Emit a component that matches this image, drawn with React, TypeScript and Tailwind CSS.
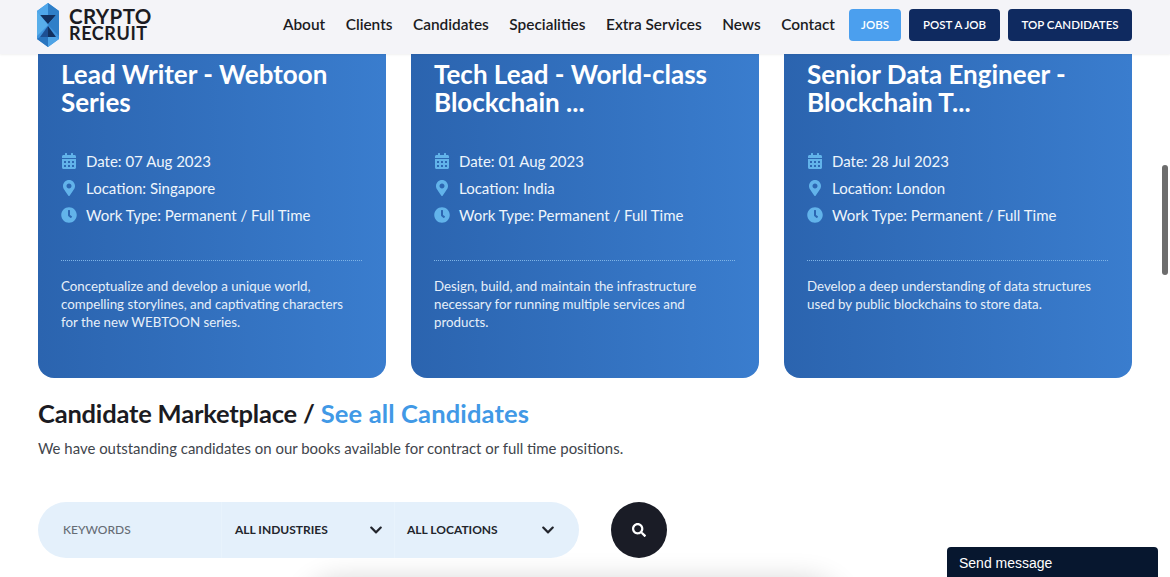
import { FaCalendarAlt, FaChevronDown, FaClock, FaMapMarkerAlt, FaSearch } from "react-icons/fa";

const navLinks = ["About", "Clients", "Candidates", "Specialities", "Extra Services", "News", "Contact"];

const jobs = [
  {
    title: "Lead Writer - Webtoon Series",
    date: "07 Aug 2023",
    location: "Singapore",
    text: "Conceptualize and develop a unique world, compelling storylines, and captivating characters for the new WEBTOON series.",
  },
  {
    title: "Tech Lead - World-class Blockchain ...",
    date: "01 Aug 2023",
    location: "India",
    text: "Design, build, and maintain the infrastructure necessary for running multiple services and products.",
  },
  {
    title: "Senior Data Engineer - Blockchain T...",
    date: "28 Jul 2023",
    location: "London",
    text: "Develop a deep understanding of data structures used by public blockchains to store data.",
  },
];

function Logo() {
  return (
    <div className="flex items-center gap-[10px]">
      <svg width="22" height="44" viewBox="0 0 22 44" aria-hidden="true">
        <polygon points="11,0 22,8 22,36 11,44 0,36 0,8" fill="#3f94de" />
        <polygon points="0,8 11,0 11,12 3,12" fill="#4fa6ea" />
        <polygon points="11,0 22,8 19,12 11,12" fill="#2f7fc8" />
        <polygon points="3,12 19,12 11,21" fill="#12305f" />
        <polygon points="0,8 3,12 11,22 0,33" fill="#58aeea" />
        <polygon points="22,8 19,12 11,22 22,33" fill="#2f7fc8" />
        <polygon points="3,34 11,23 11,34" fill="#1d4f93" />
        <polygon points="19,34 11,23 11,34" fill="#12305f" />
        <polygon points="0,36 3,34 11,34 11,44" fill="#2a75bf" />
        <polygon points="22,36 19,34 11,34 11,44" fill="#4ea3e6" />
      </svg>
      <div className="flex flex-col text-[#1b1b22]">
        <span className="text-[20.5px] leading-[17px] font-bold tracking-[0.4px]">CRYPTO</span>
        <span className="text-[18px] leading-[17px] font-bold tracking-[0.6px]">RECRUIT</span>
      </div>
    </div>
  );
}

function Header() {
  return (
    <header className="absolute inset-x-0 top-0 z-10 flex h-[54px] items-center justify-between bg-[#f4f4f8] pr-[38px] pb-1 pl-[37px] shadow-[0_1px_2px_rgba(0,0,0,0.06)]">
      <Logo />
      <nav className="flex items-center">
        <ul className="mr-[14px] flex gap-[20.5px] text-[15.4px] font-semibold text-[#1b1b22]">
          {navLinks.map((link) => (
            <li key={link}>{link}</li>
          ))}
        </ul>
        <div className="flex h-8 gap-2 text-[11.5px] font-semibold text-white">
          <span className="flex w-[52px] items-center justify-center rounded bg-[#4b9fee]">JOBS</span>
          <span className="flex w-[91px] items-center justify-center rounded bg-[#0f2a60]">POST A JOB</span>
          <span className="flex w-[124px] items-center justify-center rounded bg-[#0f2a60]">TOP CANDIDATES</span>
        </div>
      </nav>
    </header>
  );
}

function JobCard({ job }: { job: (typeof jobs)[number] }) {
  return (
    <article className="h-[324px] rounded-b-[16px] bg-gradient-to-r from-[#2b64af] to-[#3a7dce] pt-[6px] pr-[24px] pl-[23px] text-white">
      <h3 className="text-[26px] leading-[28px] font-bold">{job.title}</h3>
      <ul className="mt-[35px] flex flex-col gap-[7px] text-[15px] leading-[20px] text-[#eef5fc]">
        <li className="flex items-center gap-[9px]">
          <FaCalendarAlt className="h-4 w-4 text-[#62b3ea]" />
          Date: {job.date}
        </li>
        <li className="flex items-center gap-[9px]">
          <FaMapMarkerAlt className="h-4 w-4 text-[#62b3ea]" />
          Location: {job.location}
        </li>
        <li className="flex items-center gap-[9px]">
          <FaClock className="h-4 w-4 text-[#62b3ea]" />
          Work Type: Permanent / Full Time
        </li>
      </ul>
      <div className="mt-[35px] border-t border-dotted border-[#7fb4e6]" />
      <p className="mt-[16px] max-w-[296px] text-[13.3px] leading-[18px] text-[#e6eff9]">{job.text}</p>
    </article>
  );
}

function SearchBar() {
  return (
    <div className="mt-[44px] flex items-center gap-[32px]">
      <div className="flex h-14 w-[541px] items-center rounded-full bg-[#e4f0fb] text-[12px]">
        <span className="w-[183px] pl-[25px] font-medium text-[#666c74]">KEYWORDS</span>
        <div className="flex h-full w-[173px] items-center justify-between border-l border-[#e8f3fc] pr-[11px] pl-[13px] font-bold text-[#22252c]">
          ALL INDUSTRIES
          <FaChevronDown className="h-[14px] w-[14px]" />
        </div>
        <div className="flex h-full w-[171px] items-center justify-between border-l border-[#e8f3fc] pr-[10px] pl-[12px] font-bold text-[#22252c]">
          ALL LOCATIONS
          <FaChevronDown className="h-[14px] w-[14px]" />
        </div>
      </div>
      <button className="flex h-14 w-14 items-center justify-center rounded-full bg-[#1a1c26] text-white">
        <FaSearch className="h-[14px] w-[14px]" />
      </button>
    </div>
  );
}

export default function App() {
  return (
    <div className="relative h-[577px] overflow-hidden bg-white font-['Lato',sans-serif] text-[#1b1b22]">
      <Header />
      <main className="px-[38px] pt-[54px]">
        <section className="grid w-[1094px] grid-cols-3 gap-[25px]">
          {jobs.map((job) => (
            <JobCard key={job.title} job={job} />
          ))}
        </section>
        <section className="mt-[19px]">
          <h2 className="text-[25.5px] leading-[32px] font-bold tracking-[-0.2px]">
            Candidate Marketplace / <span className="tracking-[0.15px] text-[#4199e6]">See all Candidates</span>
          </h2>
          <p className="mt-[9px] text-[14.95px] leading-[20px] text-[#41454c]">
            We have outstanding candidates on our books available for contract or full time positions.
          </p>
          <SearchBar />
        </section>
        <div className="mt-[24px] ml-[270px] h-[60px] w-[530px] rounded-[40px] bg-white shadow-[0_0_30px_rgba(0,0,0,0.2)]" />
      </main>
      <div className="absolute top-[165px] right-[2px] h-[110px] w-[6px] rounded-full bg-[#6d6d6d]" />
      <div className="absolute right-[12px] bottom-0 flex h-[30px] w-[211px] items-center rounded-t bg-[#07172f] px-3 pt-[2px] font-['Liberation_Sans',sans-serif] text-[14px] text-white">
        Send message
      </div>
    </div>
  );
}
